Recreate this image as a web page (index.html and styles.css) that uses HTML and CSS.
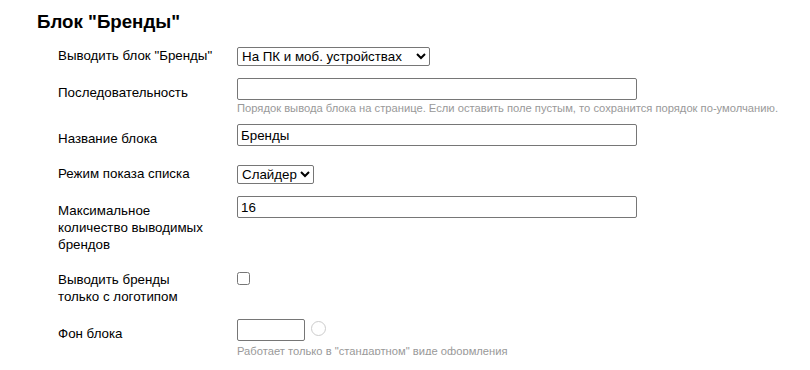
FILE: index.html
```html
<!DOCTYPE html>
<html lang="ru">
<head>
    <meta charset="UTF-8">
    <meta name="viewport" content="width=device-width, initial-scale=1.0">
    <title>Блок "Бренды"</title>
    <link rel="stylesheet" href="styles.css">
</head>
<body>
    <div class="page">
        <h2>Блок "Бренды"</h2>

        <div class="form">
            <div class="form-row">
                <label class="form-label" for="brands-show">Выводить блок "Бренды"</label>
                <div class="form-field">
                    <select id="brands-show" class="select select-wide">
                        <option>На ПК и моб. устройствах</option>
                        <option>Только на ПК</option>
                        <option>Не выводить</option>
                    </select>
                </div>
            </div>

            <div class="form-row">
                <label class="form-label" for="brands-sort">Последовательность</label>
                <div class="form-field">
                    <input type="text" id="brands-sort" class="text-input">
                    <div class="hint">Порядок вывода блока на странице. Если оставить поле пустым, то сохранится порядок по-умолчанию.</div>
                </div>
            </div>

            <div class="form-row">
                <label class="form-label" for="brands-title">Название блока</label>
                <div class="form-field">
                    <input type="text" id="brands-title" class="text-input" value="Бренды">
                </div>
            </div>

            <div class="form-row">
                <label class="form-label" for="brands-mode">Режим показа списка</label>
                <div class="form-field">
                    <select id="brands-mode" class="select">
                        <option>Слайдер</option>
                        <option>Плитка</option>
                    </select>
                </div>
            </div>

            <div class="form-row">
                <label class="form-label" for="brands-count">Максимальное количество выводимых брендов</label>
                <div class="form-field">
                    <input type="text" id="brands-count" class="text-input" value="16">
                </div>
            </div>

            <div class="form-row form-row-check">
                <label class="form-label" for="brands-logo">Выводить бренды только с логотипом</label>
                <div class="form-field">
                    <input type="checkbox" id="brands-logo" class="checkbox">
                </div>
            </div>

            <div class="form-row">
                <label class="form-label" for="brands-bg">Фон блока</label>
                <div class="form-field">
                    <div class="color-field">
                        <input type="text" id="brands-bg" class="color-input">
                        <span class="color-swatch"></span>
                    </div>
                    <div class="hint">Работает только в "стандартном" виде оформления</div>
                </div>
            </div>
        </div>
    </div>
</body>
</html>
```

FILE: styles.css
```css
body {
    margin: 0;
    font-family: "Liberation Sans", Arial, sans-serif;
    color: #000;
}
.page {
    padding: 11px 0 0 37px;
}
h2 {
    margin: 0 0 9px;
    font-size: 18.7px;
    line-height: 21px;
    font-weight: bold;
}
.form {
    display: flex;
    flex-direction: column;
    gap: 12px;
    padding-left: 21px;
}
.form-row {
    display: grid;
    grid-template-columns: 179px 1fr;
    align-items: start;
}
.form-row-check {
    padding-bottom: 2px;
}
.form-label {
    padding: 6px 24px 0 0;
    font-size: 13.33px;
    line-height: 17px;
}
.form-field {
    display: flex;
    flex-direction: column;
    align-items: flex-start;
}
.text-input,
.color-input {
    box-sizing: border-box;
    height: 22px;
    margin: 0;
    padding: 1px 3px;
    border: 1px solid #767676;
    border-radius: 2px;
    font-family: "Liberation Sans", Arial, sans-serif;
    font-size: 13.33px;
    color: #000;
}
.text-input {
    width: 400px;
}
.select {
    box-sizing: border-box;
    height: 19px;
    margin: 6px 0 0;
    padding: 0;
    border: 1px solid #767676;
    border-radius: 2px;
    background: #fff;
    font-family: "Liberation Sans", Arial, sans-serif;
    font-size: 13.33px;
    color: #000;
}
.select-wide {
    width: 193px;
}
.checkbox {
    width: 13px;
    height: 13px;
    margin: 7px 0 0;
}
.color-field {
    display: flex;
    align-items: center;
    gap: 6px;
    margin-bottom: 2px;
}
.color-input {
    width: 68px;
}
.color-swatch {
    box-sizing: border-box;
    width: 15px;
    height: 15px;
    margin-top: -3px;
    border: 1px solid #ccc;
    border-radius: 50%;
}
.hint {
    margin-top: 4px;
    font-size: 11.2px;
    line-height: 8px;
    color: #999;
}
```
